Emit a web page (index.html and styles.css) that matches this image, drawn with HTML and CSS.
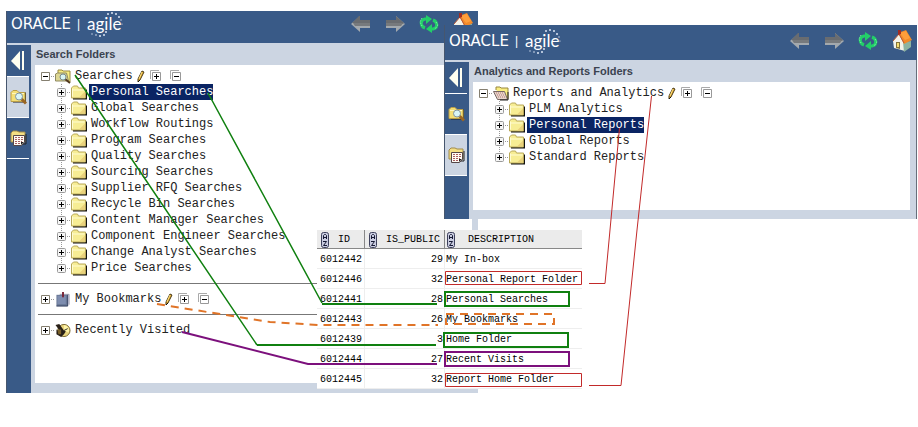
FILE: index.html
```html
<!DOCTYPE html>
<html lang="en">
<head>
<meta charset="utf-8">
<title>Folders</title>
<link rel="stylesheet" href="styles.css">
</head>
<body>
<svg class="defs" aria-hidden="true">
  <symbol id="back" viewBox="0 0 20 18"><path d="M9 1 0 9l9 8v-4h10V6H9z" fill="#a3a9ae"/><path d="M8 1 1 8h18V5H9V1z" fill="#696c70"/><path d="M2 8h17v3H4z" fill="#777a7d"/></symbol>
  <symbol id="forward" viewBox="0 0 20 18"><path d="m11 1 9 8-9 8v-4H1V6h10z" fill="#a3a9ae"/><path d="m11 1 8 7-1 1H1V5h10z" fill="#696c70"/><path d="M1 8h17l-2 3H1z" fill="#777a7d"/></symbol>
  <symbol id="refresh" viewBox="0 0 20 18"><g fill="none" stroke="#22cf68" stroke-width="3"><path d="M6 13C1 11 1 5 6 4h2"/><path d="M14 5c5 2 5 8 0 9h-2"/></g><path d="m7 0 6 4-6 5zM13 9l-6 5 6 4z" fill="#22cf68"/><path d="M3 11 1 7l2-4M17 7l2 3-3 4" stroke="#8bf0ac" fill="none" stroke-dasharray="1 1"/></symbol>
  <symbol id="home" viewBox="0 0 20 22"><path d="M1 11 7 4l6 7v10l-11-3z" fill="#f3f3e9"/><path d="m11 12 8-1v6l-7 5z" fill="#8cb3a0"/><path d="M6 3 14 0l6 10-8 4z" fill="#f38a28"/><path d="m8 3 6-2 4 7-5 2z" fill="#ff9e3b"/><path d="M1 11 7 4l5 9" fill="none" stroke="#b8583a"/><path d="M6 0h3v4l-3 1z" fill="#a32d22"/><path d="M4 12h4v7l-4-1z" fill="#84743a"/><path d="M5 13h2v4H5z" fill="#f5df74"/></symbol>
  <symbol id="collapse" viewBox="0 0 14 21"><path d="M9 1v19L0 11z" fill="#fffff0"/><path d="M11 1h2v19h-2z" fill="#fffff0"/></symbol>
  <symbol id="folder" viewBox="0 0 16 14"><path d="M2 13h14V4" stroke="#111" fill="none" stroke-width="2"/><path d="M.5 12.500v-10l2-2h4l1 2h7v10z" fill="#f7ed94" stroke="#b8a85a"/><path d="M1.500 4.500h12M1.500 11V3" stroke="#fffcd2"/><path d="m8 12 6-6v6z" fill="#ead27c"/></symbol>
  <symbol id="search-folder" viewBox="0 0 17 15"><path d="M3 12h12V3" stroke="#222" fill="none" stroke-width="2"/><path d="M1 11V3l2-2h4l2 2h6v9H1z" fill="#f4df75" stroke="#b99d47"/><path d="M2 4h12" stroke="#fff8c0"/><path d="m11 9 5 5" stroke="#9b6623" stroke-width="3"/><circle cx="9" cy="7" r="3.500" fill="#d9f5f6" stroke="#8295a0"/></symbol>
  <symbol id="report-folder" viewBox="0 0 17 16"><path d="M1 12V3l2-2h4l2 1h6v10z" fill="#f4df84" stroke="#a18b4c"/><path d="M16 4v10H5" fill="none" stroke="#222"/><path d="M3.500 5.500h11v7l-3 3h-8z" fill="#fffbf5" stroke="#544747"/><path d="M5 7.500h8M5 9.500h8M5 11.500h7M5 13.500h5" stroke="#a95f5f" stroke-dasharray="2 1"/><path d="M11 15v-3h3z" fill="#222"/></symbol>
  <symbol id="searches" viewBox="0 0 16 15"><path d="M3 4V1h4l1 1h7v11" fill="#f9ed80" stroke="#99883e"/><path d="M.500 12V5l2-1h9l2 8z" fill="#ddd793" stroke="#8f8962"/><path d="m10 10 5 4" stroke="#51391f" stroke-width="2"/><circle cx="8" cy="8" r="3" fill="#d9f4f1" stroke="#788a90"/></symbol>
  <symbol id="reports" viewBox="0 0 16 15"><path d="M3 4V1h4l1 1h7v11" fill="#f9ed80" stroke="#99883e"/><path d="M.500 5.500h11l3 8h-10z" fill="#e6d4cb" stroke="#776762"/><path d="M3 7h8M4 9h8M5 11h8" stroke="#b77772" stroke-dasharray="1 1"/><path d="M15 6v8H7" stroke="#222" fill="none"/></symbol>
  <symbol id="book" viewBox="0 0 16 16"><path d="M4.500 2.500h10v11" fill="#eef" stroke="#9a9aad"/><path d="M1 3h12v12H1z" fill="#687795"/><path d="M2 4h9v9H2z" fill="#7e8daf"/><path d="M1 15h12V3" stroke="#303d5c" fill="none"/><path d="M7 0h2v6L8 5 7 6z" fill="#762032"/></symbol>
  <symbol id="clock" viewBox="0 0 16 16"><circle cx="9" cy="8" r="6.500" fill="#e7d37c" stroke="#77642c"/><path d="M9 8V2a6 6 0 0 1 5 8z" fill="#fff5a9"/><path d="M0 2 4 1l5 7 2 1-2 3-3 3-5-3V7l4 2z" fill="#292017"/><path d="M2 7h4v5H3z" fill="#79602a"/><path d="m9 8 4-2" stroke="#222"/></symbol>
  <symbol id="pencil" viewBox="0 0 8 13"><path d="m5 1 2 1-4 8-2 2V9z" fill="#e1aa32" stroke="#4b3b17"/><path d="m5 2-3 7" stroke="#ffe07a"/><path d="m1 12 2-2" stroke="#111"/></symbol>
  <symbol id="expand-all" viewBox="0 0 12 12"><path d="M.500 9V.500H9" fill="none" stroke="#aaa"/><path d="M2.500 2.500h8v8h-8z" fill="#fff" stroke="#999"/><path d="M4 6.500h5M6.500 4v5" stroke="#000"/></symbol>
  <symbol id="collapse-all" viewBox="0 0 12 12"><path d="M.500 9V.500H9" fill="none" stroke="#aaa"/><path d="M2.500 2.500h8v8h-8z" fill="#fff" stroke="#999"/><path d="M4 6.500h5" stroke="#000"/></symbol>
  <symbol id="minus" viewBox="0 0 14 16"><path d="M.500 4.500h8v8h-8z" fill="#fff" stroke="#857f70"/><path d="M2 8.500h5" stroke="#000"/><path d="M10 8.500h4" stroke="#999" stroke-dasharray="1 1"/></symbol>
  <symbol id="plus" viewBox="0 0 14 16"><path d="M.500 4.500h8v8h-8z" fill="#fff" stroke="#857f70"/><path d="M2 8.500h5M4.500 6v5" stroke="#000"/><path d="M10 8.500h4" stroke="#999" stroke-dasharray="1 1"/></symbol>
  <symbol id="branch" viewBox="0 0 14 16"><path d="M4.500 0v4M4.500 14v2M10 8.500h4" stroke="#999" stroke-dasharray="1 1"/><rect x=".5" y="4.500" width="8" height="8" rx="1" fill="#f5f5f5" stroke="#999"/><path d="M2 8.500h5M4.500 6v5" stroke="#000"/></symbol>
  <symbol id="branch-end" viewBox="0 0 14 16"><path d="M4.500 0v4M10 8.500h4" stroke="#999" stroke-dasharray="1 1"/><rect x=".5" y="4.500" width="8" height="8" rx="1" fill="#f5f5f5" stroke="#999"/><path d="M2 8.500h5M4.500 6v5" stroke="#000"/></symbol>
  <symbol id="sort" viewBox="0 0 8 16"><rect x=".5" y=".5" width="7" height="15" rx="2" fill="#c9cce0" stroke="#3d405c"/><path d="M2.500 7V3.500l1-1h1l1 1V7M3 5.500h2M2 9.500h3.500L2.500 13.500H6" fill="none" stroke="#151833"/></symbol>
  <symbol id="dots" viewBox="0 0 36 26"><g fill="#dbe6f5"><circle cx="21" cy="2" r="1"/><circle cx="25" cy="1" r="1"/><circle cx="29" cy="2" r="1"/><circle cx="32" cy="5" r="1"/><circle cx="34" cy="8" r=".7"/><circle cx="35" cy="12" r=".6"/><circle cx="5" cy="22" r=".7"/><circle cx="9" cy="23" r=".8"/><circle cx="13" cy="24" r="1"/><circle cx="17" cy="23" r="1"/><circle cx="19" cy="20" r="1"/></g></symbol>
</svg>

<main class="desktop">
  <section class="window searches">
    <header class="banner">
      <div class="brand"><span class="oracle">ORACLE</span><span class="bar">|</span><span class="agile">agile<svg><use href="#dots"/></svg></span></div>
      <nav class="tools">
        <button aria-label="Back"><svg><use href="#back"/></svg></button>
        <button aria-label="Forward"><svg><use href="#forward"/></svg></button>
        <button aria-label="Refresh"><svg><use href="#refresh"/></svg></button>
        <button aria-label="Home"><svg class="tall"><use href="#home"/></svg></button>
      </nav>
    </header>
    <div class="body">
      <aside class="side">
        <button class="fold" aria-label="Collapse"><svg><use href="#collapse"/></svg></button>
        <button class="tab active" aria-label="Searches"><svg><use href="#search-folder"/></svg></button>
        <button class="tab" aria-label="Reports"><svg><use href="#report-folder"/></svg></button>
      </aside>
      <div class="pane">
        <h2>Search Folders</h2>
        <div class="content">
          <div class="row root"><button class="toggle" aria-label="Collapse"><svg><use href="#minus"/></svg></button><svg class="icon"><use href="#searches"/></svg><span class="name">Searches</span><button class="edit" aria-label="Edit"><svg><use href="#pencil"/></svg></button><button class="all" aria-label="Expand all"><svg><use href="#expand-all"/></svg></button><button class="all" aria-label="Collapse all"><svg><use href="#collapse-all"/></svg></button></div>
          <ul>
            <li class="row"><button class="toggle" aria-label="Expand"><svg><use href="#branch"/></svg></button><svg class="icon"><use href="#folder"/></svg><span class="name selected">Personal Searches</span></li>
            <li class="row"><button class="toggle" aria-label="Expand"><svg><use href="#branch"/></svg></button><svg class="icon"><use href="#folder"/></svg><span class="name">Global Searches</span></li>
            <li class="row"><button class="toggle" aria-label="Expand"><svg><use href="#branch"/></svg></button><svg class="icon"><use href="#folder"/></svg><span class="name">Workflow Routings</span></li>
            <li class="row"><button class="toggle" aria-label="Expand"><svg><use href="#branch"/></svg></button><svg class="icon"><use href="#folder"/></svg><span class="name">Program Searches</span></li>
            <li class="row"><button class="toggle" aria-label="Expand"><svg><use href="#branch"/></svg></button><svg class="icon"><use href="#folder"/></svg><span class="name">Quality Searches</span></li>
            <li class="row"><button class="toggle" aria-label="Expand"><svg><use href="#branch"/></svg></button><svg class="icon"><use href="#folder"/></svg><span class="name">Sourcing Searches</span></li>
            <li class="row"><button class="toggle" aria-label="Expand"><svg><use href="#branch"/></svg></button><svg class="icon"><use href="#folder"/></svg><span class="name">Supplier RFQ Searches</span></li>
            <li class="row"><button class="toggle" aria-label="Expand"><svg><use href="#branch"/></svg></button><svg class="icon"><use href="#folder"/></svg><span class="name">Recycle Bin Searches</span></li>
            <li class="row"><button class="toggle" aria-label="Expand"><svg><use href="#branch"/></svg></button><svg class="icon"><use href="#folder"/></svg><span class="name">Content Manager Searches</span></li>
            <li class="row"><button class="toggle" aria-label="Expand"><svg><use href="#branch"/></svg></button><svg class="icon"><use href="#folder"/></svg><span class="name">Component Engineer Searches</span></li>
            <li class="row"><button class="toggle" aria-label="Expand"><svg><use href="#branch"/></svg></button><svg class="icon"><use href="#folder"/></svg><span class="name">Change Analyst Searches</span></li>
            <li class="row"><button class="toggle" aria-label="Expand"><svg><use href="#branch-end"/></svg></button><svg class="icon"><use href="#folder"/></svg><span class="name">Price Searches</span></li>
          </ul>
          <div class="group"><div class="row root"><button class="toggle" aria-label="Expand"><svg><use href="#plus"/></svg></button><svg class="icon"><use href="#book"/></svg><span class="name">My Bookmarks</span><button class="edit" aria-label="Edit"><svg><use href="#pencil"/></svg></button><button class="all" aria-label="Expand all"><svg><use href="#expand-all"/></svg></button><button class="all" aria-label="Collapse all"><svg><use href="#collapse-all"/></svg></button></div></div>
          <div class="group"><div class="row root"><button class="toggle" aria-label="Expand"><svg><use href="#plus"/></svg></button><svg class="icon"><use href="#clock"/></svg><span class="name">Recently Visited</span></div></div>
        </div>
      </div>
    </div>
  </section>

  <section class="window analytics">
    <header class="banner">
      <div class="brand"><span class="oracle">ORACLE</span><span class="bar">|</span><span class="agile">agile<svg><use href="#dots"/></svg></span></div>
      <nav class="tools">
        <button aria-label="Back"><svg><use href="#back"/></svg></button>
        <button aria-label="Forward"><svg><use href="#forward"/></svg></button>
        <button aria-label="Refresh"><svg><use href="#refresh"/></svg></button>
        <button aria-label="Home"><svg class="tall"><use href="#home"/></svg></button>
      </nav>
    </header>
    <div class="body">
      <aside class="side">
        <button class="fold" aria-label="Collapse"><svg><use href="#collapse"/></svg></button>
        <button class="tab" aria-label="Searches"><svg><use href="#search-folder"/></svg></button>
        <button class="tab active" aria-label="Reports"><svg><use href="#report-folder"/></svg></button>
      </aside>
      <div class="pane">
        <h2>Analytics and Reports Folders</h2>
        <div class="content">
          <div class="row root"><button class="toggle" aria-label="Collapse"><svg><use href="#minus"/></svg></button><svg class="icon"><use href="#reports"/></svg><span class="name">Reports and Analytics</span><button class="edit" aria-label="Edit"><svg><use href="#pencil"/></svg></button><button class="all" aria-label="Expand all"><svg><use href="#expand-all"/></svg></button><button class="all" aria-label="Collapse all"><svg><use href="#collapse-all"/></svg></button></div>
          <ul>
            <li class="row"><button class="toggle" aria-label="Expand"><svg><use href="#branch"/></svg></button><svg class="icon"><use href="#folder"/></svg><span class="name">PLM Analytics</span></li>
            <li class="row"><button class="toggle" aria-label="Expand"><svg><use href="#branch"/></svg></button><svg class="icon"><use href="#folder"/></svg><span class="name selected">Personal Reports</span></li>
            <li class="row"><button class="toggle" aria-label="Expand"><svg><use href="#branch"/></svg></button><svg class="icon"><use href="#folder"/></svg><span class="name">Global Reports</span></li>
            <li class="row"><button class="toggle" aria-label="Expand"><svg><use href="#branch-end"/></svg></button><svg class="icon"><use href="#folder"/></svg><span class="name">Standard Reports</span></li>
          </ul>
        </div>
      </div>
    </div>
  </section>

  <table class="results">
    <thead><tr><th class="id"><div><svg><use href="#sort"/></svg><span>ID</span></div></th><th class="public"><div><svg><use href="#sort"/></svg><span>IS_PUBLIC</span></div></th><th class="desc"><div><svg><use href="#sort"/></svg><span>DESCRIPTION</span></div></th></tr></thead>
    <tbody>
      <tr><td>6012442</td><td>29</td><td>My In-box</td></tr>
      <tr><td>6012446</td><td>32</td><td>Personal Report Folder</td></tr>
      <tr><td>6012441</td><td>28</td><td>Personal Searches</td></tr>
      <tr><td>6012443</td><td>26</td><td>My Bookmarks</td></tr>
      <tr><td>6012439</td><td>3</td><td>Home Folder</td></tr>
      <tr><td>6012444</td><td>27</td><td>Recent Visits</td></tr>
      <tr><td>6012445</td><td>32</td><td>Report Home Folder</td></tr>
    </tbody>
  </table>

  <svg class="links" viewBox="0 0 918 427" aria-hidden="true">
    <g fill="none">
      <g stroke="#108010" stroke-width="1.500"><path d="M75 75 257 345M208 93 322 303"/></g>
      <g stroke="#108010" stroke-width="2"><path d="M257 345H436M322 304H437M445 292H569V306H445zM444 333H568V347H444z"/></g>
      <g stroke="#e07428" stroke-width="2" stroke-dasharray="8 6"><path d="M157 304 270 322 318 325H438M446 314H554V324H446z"/></g>
      <g stroke="#7c107c" stroke-width="2"><path d="M182 332 308 364H437M445 352H569V366H445z"/></g>
      <g stroke="#c22a2a"><path d="M619.500 128 605 283.500H589M651.500 96 637 230 621 385.500H589M445.500 271.500H581.500V284.500H445.500zM445.500 373.500H581.500V386.500H445.500z"/></g>
    </g>
  </svg>
</main>
</body>
</html>
```
FILE: styles.css
```css
* { box-sizing: border-box; }
body { margin: 0; background: #fff; color: #222; font: 12px/16px "Liberation Mono", monospace; }
button { display: block; flex: none; margin: 0; padding: 0; border: 0; background: none; }
svg { display: block; flex: none; }
ul { margin: 0; padding: 0 0 0 16px; list-style: none; }
.defs { position: absolute; width: 0; height: 0; }
.desktop { position: relative; min-height: 427px; }

.window { position: absolute; display: flex; flex-direction: column; background: #ccd5e2; border-left: 1px solid #46566e; }
.searches { left: 6px; top: 11px; width: 472px; }
.analytics { left: 444px; top: 25px; width: 473px; }
.banner { display: flex; justify-content: space-between; height: 32px; padding: 0 5px 0 4px; background: #395a87; color: #fff; }
.analytics .banner { height: 35px; }
.brand { display: flex; align-items: center; height: 26px; }
.analytics .brand { height: 32px; }
.oracle { font: 15px/16px "DejaVu Sans", sans-serif; }
.bar { margin: 0 7px 0 6px; font: 12px/16px "Liberation Sans", sans-serif; }
.agile { position: relative; font: 17px/20px Lato, sans-serif; }
.agile svg { position: absolute; left: 0; top: -2px; width: 36px; height: 26px; }
.tools { display: flex; align-items: flex-start; gap: 14px; padding-top: 4px; }
.analytics .tools { padding-top: 7px; }
.tools svg { width: 20px; height: 18px; }
.tools .tall { height: 22px; margin-top: -2px; }

.body { display: flex; flex: 1; }
.side { width: 24px; margin-top: 2px; background: #395a87; }
.side button { width: 22px; display: grid; place-items: center; border-bottom: 1px solid #fff; }
.side .fold { height: 32px; }
.fold svg { width: 14px; height: 21px; }
.side .tab { height: 41px; }
.side .active { background: #ccd5e2; }
.tab svg { width: 17px; height: 16px; }
.pane { flex: 1; padding: 0 6px 10px 4px; }
.pane h2 { margin: 0; height: 22px; padding-left: 1px; color: #3b4350; font: bold 11px/22px "Liberation Sans", sans-serif; }
.analytics .body { border-right: 1px solid #666f7b; }
.analytics .pane { padding-bottom: 9px; }
.content { min-height: 318px; padding: 3px 0 0 6px; background: #fff; }
.analytics .content { min-height: 128px; }
.row { display: flex; align-items: center; height: 16px; white-space: nowrap; }
.toggle svg { width: 14px; height: 16px; }
.icon { width: 16px; height: 15px; }
.name { padding-left: 2px; margin-left: 2px; }
.selected { background: #0a2463; color: #fff; }
.edit { margin: 0 5px 0 4px; }
.edit svg { width: 8px; height: 13px; }
.all { margin-right: 8px; }
.all svg { width: 12px; height: 12px; }
.group { margin: 7px 0 0 -3px; padding: 7px 0 0 3px; border-top: 1px solid #777; }

.results { position: absolute; left: 317px; top: 230px; width: 265px; table-layout: fixed; border-collapse: separate; border-spacing: 0; background: #fff; color: #000; font: 10px/14px "Liberation Mono", monospace; }
.results th { height: 19px; padding: 1px 4px 0; background: #ebebeb; border-right: 1px solid #888; border-bottom: 1px solid #888; font-weight: normal; }
.results th:last-child { padding-left: 2px; border-right: 0; }
.results th div { display: flex; align-items: center; }
.results th svg { width: 8px; height: 16px; }
.id { width: 48px; }
.public { width: 80px; }
.id span { margin-left: 9px; }
.public span { margin-left: auto; }
.desc span { margin-left: 13px; }
.results td { height: 20px; padding: 2px 1px 0; border-bottom: 1px solid #eee; border-right: 1px solid #eee; white-space: nowrap; }
.results td:first-child { padding-left: 3px; }
.results td:nth-child(2) { text-align: right; }
.results td:last-child { border-right: 0; }
.links { position: absolute; left: 0; top: 0; width: 918px; height: 427px; pointer-events: none; }
```
